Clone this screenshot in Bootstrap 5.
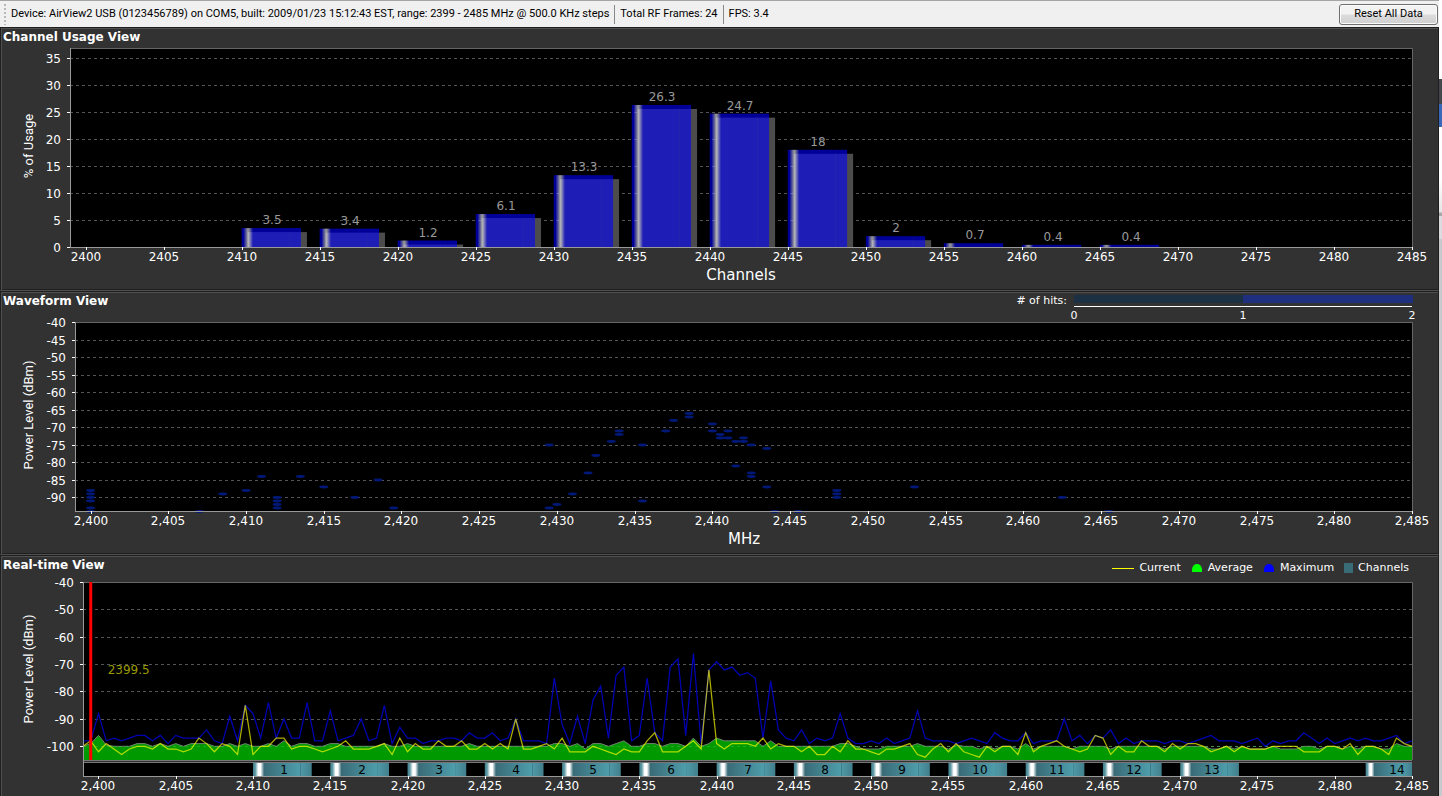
<!DOCTYPE html>
<html lang="en">
<head>
<meta charset="utf-8">
<title>AirView2</title>
<meta name="viewport" content="width=device-width, initial-scale=1">
<link href="https://cdn.jsdelivr.net/npm/bootstrap@5.3.0/dist/css/bootstrap.min.css" rel="stylesheet">
<script src="https://cdn.jsdelivr.net/npm/bootstrap@5.3.0/dist/js/bootstrap.bundle.min.js"></script>
<style>
  body { background: #fff; color: #fff; font-family: "DejaVu Sans", Verdana, sans-serif; font-size: 12px; line-height: 16px; overflow: hidden; }
  .status-bar { height: 27px; padding: 0 1px 0 4px; gap: 5px; border-top: 1px solid #a5a5a5; background: #f0f0f0; color: #000; font-family: Roboto, Tahoma, sans-serif; font-size: 11px; }
  .status-bar .grip { width: 2px; height: 21px; background: repeating-linear-gradient(#b8b8b8 0 2px, transparent 2px 4px); }
  .status-bar .rule { width: 1px; height: 19px; background: #888; }
  .reset-btn { --bs-btn-font-size: 11px; --bs-btn-line-height: 14px; width: 99px; height: 21px; color: #000; border: 1px solid #707070; border-radius: 3px; background: linear-gradient(#f2f2f2 0 48%, #dcdcdc 52%, #cfcfcf); box-shadow: inset 0 0 0 1px #fbfbfb; }
  .reset-btn:hover { color: #000; border-color: #3c7fb1; }
  .edge-strip { width: 3px; background: linear-gradient(#fff 0 79px, #44474c 79px 104px, #3a68b8 104px 127px, #fff 127px 180px, #e4e4e6 212px, #a8a8ac 213px 216px, #dcdce0 216px 239px, #c8c9cd 239px); }
  .view-panel { height: 264px; background: #323232; border: 1px solid #1e1e1e; border-bottom-color: #505050; box-shadow: inset 1px 1px 0 #505050, inset 0 -1px 0 #1e1e1e; }
  .view-head { height: 20px; padding: 1px 29px 0 2px; }
  .view-head h2 { font-size: 12px; line-height: 16px; }
  .legend-row { gap: 10px; font-size: 11px; padding-top: 2px; }
  .legend-item { gap: 5px; }
  .plot { display: block; width: 100%; height: 240px; overflow: visible; }
  .plot text { fill: #fff; font-family: "DejaVu Sans", Verdana, sans-serif; font-size: 12px; text-anchor: middle; }
  .plot text.at-end { text-anchor: end; }
  .plot text.at-start { text-anchor: start; }
  .plot text.axis-name { font-size: 15px; }
  .plot text.axis-side { font-family: Roboto, Arial, sans-serif; font-size: 13px; }
  .plot text.key-text { font-size: 11px; }
  .plot text.bar-value { fill: #999; }
  .plot text.chan-no { fill: #000; }
  .plot text.cursor-value { fill: #999900; }
</style>
</head>
<body>
<div class="d-flex vh-100">
  <main class="d-flex flex-column flex-grow-1">
    <header class="status-bar d-flex align-items-center flex-shrink-0">
      <span class="grip"></span>
      <span class="text-nowrap">Device: AirView2 USB (0123456789) on COM5, built: 2009/01/23 15:12:43 EST, range: 2399 - 2485 MHz @ 500.0 KHz steps</span>
      <span class="rule"></span>
      <span class="text-nowrap">Total RF Frames: 24</span>
      <span class="rule"></span>
      <span class="text-nowrap">FPS: 3.4</span>
      <button type="button" class="btn reset-btn p-0 ms-auto">Reset All Data</button>
    </header>

    <section class="view-panel flex-shrink-0">
      <div class="view-head"><h2 class="fw-bold m-0">Channel Usage View</h2></div>
      <svg class="plot" id="usage" role="img" aria-label="Channel usage"></svg>
    </section>

    <section class="view-panel flex-shrink-0">
      <div class="view-head"><h2 class="fw-bold m-0">Waveform View</h2></div>
      <svg class="plot" id="wave" role="img" aria-label="Waveform"></svg>
    </section>

    <section class="view-panel flex-shrink-0">
      <div class="view-head d-flex justify-content-between">
        <h2 class="fw-bold m-0">Real-time View</h2>
        <div class="legend-row d-flex align-items-center">
          <span class="legend-item d-flex align-items-center"><svg width="22" height="10" aria-hidden="true"><path d="M0 5.5H22" stroke="#ff0"/></svg>Current</span>
          <span class="legend-item d-flex align-items-center"><svg width="12" height="10" aria-hidden="true"><path d="M1 9V6Q2 1 6 1T11 6V9Z" fill="#0f0"/></svg>Average</span>
          <span class="legend-item d-flex align-items-center"><svg width="12" height="10" aria-hidden="true"><path d="M1 9V6Q2 1 6 1T11 6V9Z" fill="#00f"/></svg>Maximum</span>
          <span class="legend-item d-flex align-items-center"><svg width="9" height="10" aria-hidden="true"><path d="M0 0H9V10H0Z" fill="#3a6c78"/></svg>Channels</span>
        </div>
      </div>
      <svg class="plot" id="live" role="img" aria-label="Real-time levels"></svg>
    </section>
  </main>
  <aside class="edge-strip flex-shrink-0"></aside>
</div>

<script>
const NS = 'http://www.w3.org/2000/svg';
const F0 = 2399, F1 = 2485;

function add(parent, tag, attrs, text) {
  const el = document.createElementNS(NS, tag);
  for (const k in attrs) el.setAttribute(k, attrs[k]);
  if (text !== undefined) el.textContent = text;
  parent.appendChild(el);
  return el;
}
const snap = v => Math.round(v) + 0.5;

// Frame and grid of one chart; returns its two scales.
function frame(svg, o) {
  svg.replaceChildren();
  const right = svg.clientWidth - 26;
  const x = f => o.left + (f - F0) * (right - o.left) / (F1 - F0);
  const y = v => o.y0 + (o.v0 - v) * o.unit;
  add(svg, 'rect', {x: o.left, y: o.top, width: right - o.left, height: o.bottom - o.top, fill: '#000'});
  for (const v of o.ticks) {
    add(svg, 'path', {d: `M${o.left} ${snap(y(v))}H${right}`, stroke: '#545454', 'stroke-dasharray': '3 3'});
  }
  add(svg, 'path', {d: `M${o.left} ${o.top + 0.5}H${right + 0.5}V${o.bottom}`, fill: 'none', stroke: '#666'});
  return {x, y, right};
}
function axes(svg, o, s) {
  const base = o.axisY || o.bottom;
  for (const v of o.ticks) {
    add(svg, 'path', {d: `M${o.left - 3} ${snap(s.y(v))}h4`, stroke: '#fff'});
    add(svg, 'text', {x: o.left - 9, y: Math.round(s.y(v)) + 5, class: 'at-end'}, v);
  }
  add(svg, 'path', {d: `M${o.left + 0.5} ${o.top}V${base}`, stroke: '#999'});
  add(svg, 'path', {d: `M${o.left} ${base + 0.5}H${s.right}`, stroke: '#999'});
  for (let f = 2400; f <= F1; f += 5) {
    add(svg, 'path', {d: `M${snap(s.x(f))} ${base}v3`, stroke: '#fff'});
    add(svg, 'text', {x: Math.round(s.x(f)), y: base + 14}, o.comma ? f.toLocaleString('en-US') : f);
  }
  if (o.name) add(svg, 'text', {x: Math.round((o.left + s.right) / 2), y: base + 33, class: 'axis-name'}, o.name);
  const my = Math.round((o.top + o.bottom) / 2) - 2;
  add(svg, 'text', {transform: `translate(32 ${my}) rotate(-90)`, class: 'axis-side'}, o.side);
}
function gradient(svg, id, stops) {
  const g = add(svg, 'linearGradient', {id});
  for (const [offset, color] of stops) add(g, 'stop', {offset, 'stop-color': color});
}

const usage = [[2410, 3.5], [2415, 3.4], [2420, 1.2], [2425, 6.1], [2430, 13.3], [2435, 26.3],
  [2440, 24.7], [2445, 18], [2450, 2], [2455, 0.7], [2460, 0.4], [2465, 0.4]];

function drawUsage() {
  const svg = document.getElementById('usage');
  const o = {left: 69, top: 0, bottom: 199, y0: 10, v0: 35, unit: 5.4, ticks: [0, 5, 10, 15, 20, 25, 30, 35], name: 'Channels', side: '% of Usage'};
  const s = frame(svg, o);
  gradient(svg, 'bar-fill', [[0, '#0000ff'], [0.03, '#0000ff'], [0.1, '#f0f0ff'], [0.12, '#f0f0ff'], [0.19, '#0000ff'], [0.79, '#0000ff'], [0.8, '#0f0fe0'], [0.81, '#0000ff'], [1, '#0000ff']]);
  for (const [f, v] of usage) {
    const x = s.x(f), y = s.y(v), w = s.x(f + 3.8) - x, h = o.bottom - y;
    if (h > 4) add(svg, 'rect', {x: x + 6, y: y + 4, width: w, height: h - 4, fill: '#4c4c4c'});
    add(svg, 'rect', {x, y, width: w, height: h, fill: 'url(#bar-fill)', opacity: 0.6});
    add(svg, 'text', {x: Math.round(x + w / 2) + 1, y: Math.round(y) - 4, class: 'bar-value'}, v);
  }
  axes(svg, o, s);
}

const hits = {2400: [88, 89, 90, 91, 93, 94], 2407: [94], 2408.5: [89], 2410: [88], 2411: [84], 2412: [90, 91, 92, 93],
  2413.5: [84], 2415: [87], 2417: [90], 2418.5: [85], 2419.5: [93], 2429.5: [75, 93], 2430: [92], 2431: [89], 2432: [83],
  2432.5: [78], 2433.5: [74], 2434: [71, 72], 2435.5: [75, 91], 2437: [71], 2437.5: [68], 2438.5: [66, 67], 2440: [69, 71],
  2440.5: [72, 73], 2441: [71, 73], 2441.5: [74, 81], 2442: [73, 74], 2442.5: [75, 83, 84], 2443.5: [76, 87], 2444: [94],
  2445.5: [94], 2448: [88, 89, 90], 2453: [87], 2462.5: [90], 2465.5: [94]};

function drawWave() {
  const svg = document.getElementById('wave');
  const ticks = []; for (let v = -40; v >= -90; v -= 5) ticks.push(v);
  const o = {left: 74, top: 10, bottom: 199, y0: 10, v0: -40, unit: 3.5, ticks, comma: true, name: 'MHz', side: 'Power Level (dBm)'};
  const s = frame(svg, o);
  for (const f in hits) for (const v of hits[f]) {
    add(svg, 'ellipse', {cx: s.x(+f), cy: s.y(-v) + 0.5, rx: 4.5, ry: 1.4, fill: '#001a80', opacity: 0.95});
  }
  axes(svg, o, s);
  const k = s.right - 338;
  add(svg, 'rect', {x: k, y: -17, width: 170, height: 8, fill: '#1c3044'});
  add(svg, 'rect', {x: k + 169, y: -17, width: 170, height: 8, fill: '#1e2f80'});
  add(svg, 'path', {d: `M${k} -5.5h338`, stroke: '#fff'});
  add(svg, 'text', {x: k - 7, y: -8, class: 'key-text at-end'}, '# of hits:');
  for (let i = 0; i < 3; i++) add(svg, 'text', {x: k + i * 169, y: 7, class: 'key-text'}, i);
}

// One reading per 0.5 MHz from 2399 to 2485, in -dBm.
const maximum = [98,98,88,98,97,98,97,96,96,98,96,99,96,97,97,97,94,98,99,89,98,85,88,97,84,97,90,97,97,84,98,98,87,98,97,96,90,
  98,97,85,99,93,97,97,99,98,98,97,97,98,95,97,97,95,98,97,90,98,98,98,99,75,92,99,89,99,83,78,97,74,71,98,96,75,95,98,71,68,96,66,99,72,69,
  72,71,74,73,75,97,76,94,97,98,94,99,97,98,97,88,97,99,99,98,99,97,99,98,97,87,97,98,98,98,99,98,97,98,99,95,97,98,98,95,99,98,98,98,90,98,
  96,99,96,97,94,99,97,99,98,98,98,99,98,98,99,98,97,96,98,98,98,99,98,97,100,98,99,98,98,95,97,99,97,99,98,97,98,97,98,98,97,96,99,98];
const current = [100,98,102,99,101,103,101,100,100,101,99,101,101,102,101,97,99,102,99,100,103,85,103,100,100,97,97,101,100,100,101,102,101,100,98,101,101,
  101,100,99,103,97,102,99,101,101,98,100,100,98,101,101,99,101,99,101,90,101,101,100,99,101,97,102,102,102,100,101,102,103,101,102,102,98,95,102,102,102,100,98,101,72,99,
  101,99,99,99,100,97,101,99,100,100,102,100,103,103,100,102,98,101,101,102,103,101,101,100,99,103,104,101,99,102,99,102,103,104,100,102,100,100,103,95,102,100,99,98,100,101,
  102,101,96,97,103,100,102,102,98,100,100,102,99,101,99,99,100,102,101,100,102,100,101,101,101,100,100,100,100,102,102,102,100,100,101,99,103,100,100,101,103,97,99,100];
const average = [100,99,96,99.5,100,100,100,99,99,100,99,100,99,100,99,99,99,100,100,99,100,99,100,100,99,100,98,100,99,99,100,100,99,99,100,100,100,
  100,100,99,100,100,99,100,100,100,100,100,100,100,99,100,100,100,100,100,100,100,100,100,100,99,99,100,99,101,99,99,100,99,98,100,100,99,99,100,99,99,100,97,100,99,97,
  98,98,98,98,98,100,98,100,100,100,100,100,100,100,100,99,99,100,101,101,101,100,100,100,100,99,100,100,100,101,99.5,100,100,101,100,101,100,100,101,99,101,100,100,100,100,101,
  100,100,100,100,101,100,100,100,100,100,100,101,100,100,100,100,100,101,101,100,101,100,101,101,101,100,101,101,101,100,100,101,100,100,101,100,101,100,100,101,101,99,100,100];

function drawLive() {
  const svg = document.getElementById('live');
  const o = {left: 82, top: 6, bottom: 184, axisY: 200, y0: 6, v0: -40, unit: 2.73, ticks: [-40, -50, -60, -70, -80, -90, -100], comma: true, side: 'Power Level (dBm)'};
  const s = frame(svg, o);
  const line = a => a.map((v, i) => `${s.x(F0 + i / 2).toFixed(1)} ${(s.y(-v) + 0.5).toFixed(1)}`).join('L');
  add(svg, 'path', {d: 'M' + line(maximum), fill: 'none', stroke: '#0000b4', 'stroke-width': 1.25});
  add(svg, 'path', {d: `M${o.left} ${o.bottom}L${line(average)}V${o.bottom}Z`, fill: '#009900'});
  add(svg, 'path', {d: 'M' + line(average), fill: 'none', stroke: '#6f806f'});
  add(svg, 'path', {d: `M${o.left} ${snap(s.y(-100))}H${s.right}`, stroke: '#3cc03c', 'stroke-dasharray': '3 3', opacity: 0.5});
  add(svg, 'path', {d: 'M' + line(current), fill: 'none', stroke: '#ffff00', 'stroke-opacity': 0.68, 'stroke-width': 1.25});

  const strip = o.bottom + 2;
  add(svg, 'path', {d: `M${o.left} ${o.bottom + 0.5}H${s.right}M${o.left} ${strip + 0.5}H${s.right}`, stroke: '#777'});
  add(svg, 'rect', {x: o.left, y: strip + 1, width: s.right - o.left, height: 13, fill: '#000'});
  gradient(svg, 'chan-fill', [[0, '#3f7f8b'], [0.04, '#5e9aa5'], [0.09, '#ffffff'], [0.13, '#ffffff'], [0.19, '#3a6c78'], [0.2, '#3a6c78'], [0.8, '#4e9dab'], [0.81, '#3f7884'], [0.82, '#4e98a6'], [1, '#427f8c']]);
  for (let n = 1; n <= 14; n++) {
    const f = n < 14 ? 2405 + 5 * n : 2482;
    const x = s.x(f), w = s.x(f + 3.8) - x;
    add(svg, 'rect', {x, y: strip + 1, width: Math.min(w, s.right - x), height: 13, fill: 'url(#chan-fill)'});
    add(svg, 'text', {x: Math.round(x + w / 2) + 2, y: strip + 12, class: 'chan-no'}, n);
  }
  axes(svg, o, s);
  add(svg, 'rect', {x: s.x(2399.5) - 1.5, y: o.top, width: 3, height: o.bottom - o.top, fill: '#f00'});
  add(svg, 'text', {x: s.x(2399.5) + 17, y: 98, class: 'cursor-value at-start'}, '2399.5');
}

function drawAll() { drawUsage(); drawWave(); drawLive(); }
drawAll();
addEventListener('resize', drawAll);
</script>
</body>
</html>
